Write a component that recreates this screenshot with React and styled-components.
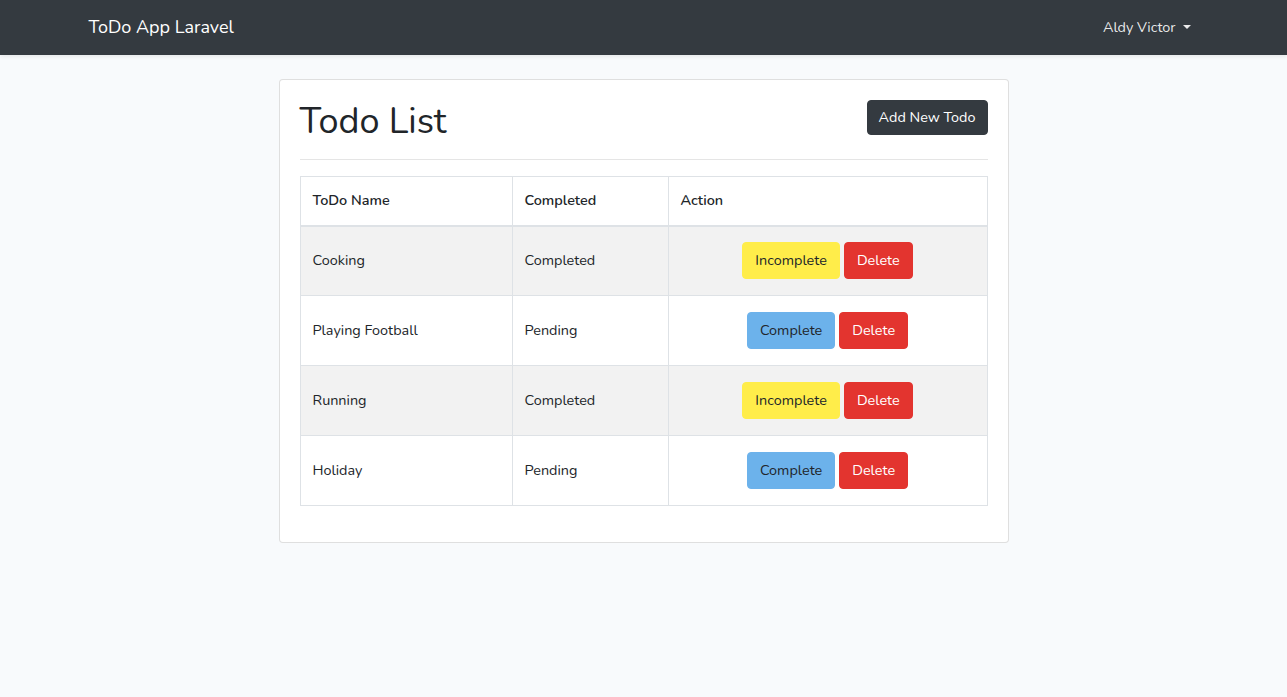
import React from 'react';
import styled, { createGlobalStyle } from 'styled-components';

const GlobalStyle = createGlobalStyle`
    * { box-sizing: border-box; }
    body {
        margin: 0;
        background: #f8fafc;
        color: #212529;
        font-family: "Nunito", "Lato", "Open Sans", sans-serif;
        font-size: 14.4px;
        line-height: 1.6;
    }
`;

const Navbar = styled.nav`
    background: #343a40;
    height: 55px;
    box-shadow: 0 .125rem .25rem rgba(0,0,0,.075);
`;

const Container = styled.div`
    width: 1140px;
    margin: 0 auto;
    padding: 0 15px;
    height: 100%;
    display: flex;
    align-items: center;
    justify-content: space-between;
`;

const Brand = styled.a`
    color: #fff;
    font-size: 18px;
    text-decoration: none;
`;

const UserLink = styled.a`
    color: rgba(255,255,255,.9);
    padding: 8px;
    text-decoration: none;
    display: flex;
    align-items: center;
    &::after {
        content: '';
        margin-left: 7px;
        border-top: 4.3px solid;
        border-left: 4.3px solid transparent;
        border-right: 4.3px solid transparent;
    }
`;

const Main = styled.main`
    padding: 24px 0;
`;

const Card = styled.div`
    width: 730px;
    margin: 0 auto;
    background: #fff;
    border: 1px solid rgba(0,0,0,.125);
    border-radius: 4px;
    padding: 20px;
`;

const Header = styled.div`
    display: flex;
    justify-content: space-between;
    align-items: flex-start;
    h1 {
        margin: 0;
        font-size: 36px;
        font-weight: 400;
        line-height: 1.2;
    }
`;

const Button = styled.button`
    font-family: inherit;
    font-size: 14.4px;
    line-height: 1.6;
    padding: 6px 12px;
    border: 1px solid ${({ bg }) => bg};
    background: ${({ bg }) => bg};
    color: ${({ fg }) => fg};
    border-radius: 4px;
    cursor: pointer;
    vertical-align: middle;
`;

const AddButton = styled(Button)`
    padding: 5px 11px;
`;

const Divider = styled.hr`
    margin: 16px 0;
    border: 0;
    border-top: 1px solid rgba(0,0,0,.1);
`;

const Table = styled.table`
    width: 100%;
    border-collapse: collapse;
    border: 1px solid #dee2e6;
    margin-bottom: 16px;
    th, td {
        border: 1px solid #dee2e6;
        padding: 12px;
        text-align: left;
        vertical-align: middle;
    }
    th { font-weight: 600; border-bottom-width: 2px; height: 49px; }
    td { height: 70px; }
`;

const Row = styled.tr`
    background: ${({ striped }) => (striped ? '#f2f2f2' : '#fff')};
`;

const ActionCell = styled.td`
    && { text-align: center; }
    button + button { margin-left: 4px; }
`;

const todos = [
    { name: 'Cooking', done: true },
    { name: 'Playing Football', done: false },
    { name: 'Running', done: true },
    { name: 'Holiday', done: false },
];

export default function App() {
    return (
        <>
            <GlobalStyle />
            <Navbar>
                <Container>
                    <Brand href="#">ToDo App Laravel</Brand>
                    <UserLink href="#">Aldy Victor</UserLink>
                </Container>
            </Navbar>
            <Main>
                <Card>
                    <Header>
                        <h1>Todo List</h1>
                        <AddButton bg="#343a40" fg="#fff">Add New Todo</AddButton>
                    </Header>
                    <Divider />
                    <Table>
                        <colgroup>
                            <col style={{ width: 212 }} />
                            <col style={{ width: 156 }} />
                            <col />
                        </colgroup>
                        <thead>
                            <tr>
                                <th>ToDo Name</th>
                                <th>Completed</th>
                                <th>Action</th>
                            </tr>
                        </thead>
                        <tbody>
                            {todos.map((todo, index) =>
                                <Row key={todo.name} striped={index % 2 === 0}>
                                    <td>{todo.name}</td>
                                    <td>{todo.done ? 'Completed' : 'Pending'}</td>
                                    <ActionCell>
                                        {todo.done
                                            ? <Button bg="#ffed4a" fg="#212529">Incomplete</Button>
                                            : <Button bg="#6cb2eb" fg="#212529">Complete</Button>}
                                        <Button bg="#e3342f" fg="#fff">Delete</Button>
                                    </ActionCell>
                                </Row>
                            )}
                        </tbody>
                    </Table>
                </Card>
            </Main>
        </>
    );
}
